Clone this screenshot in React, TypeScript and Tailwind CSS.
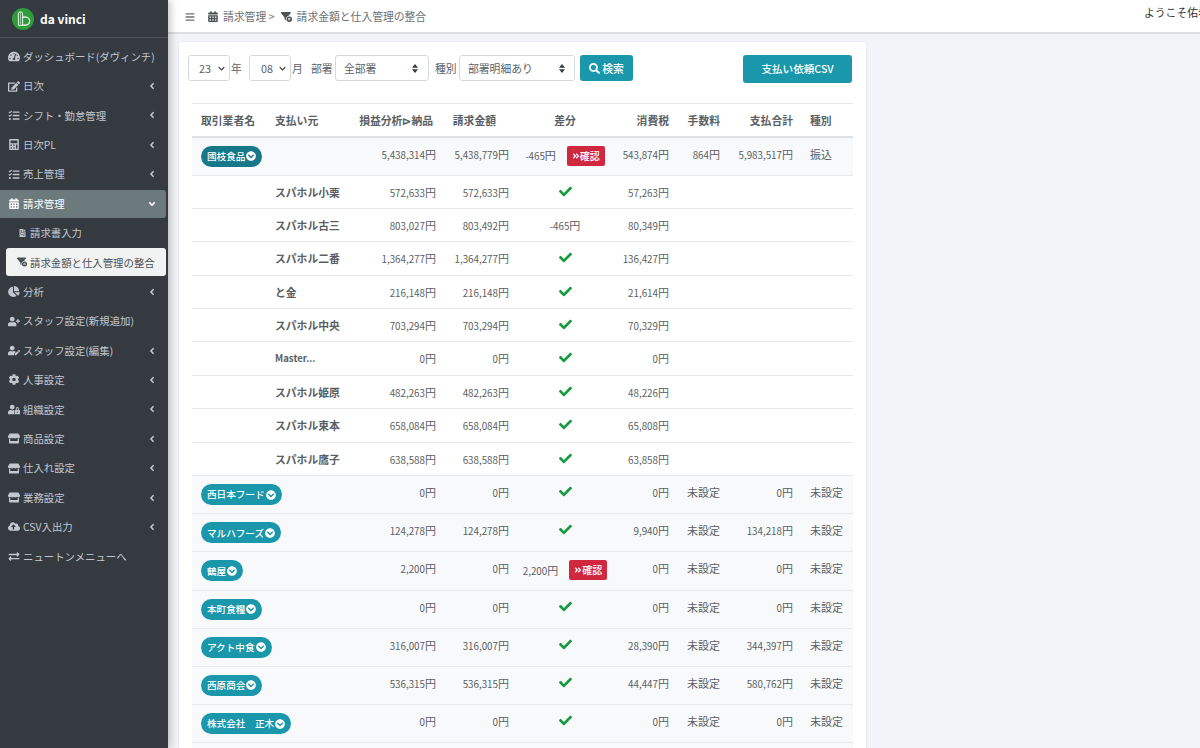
import React from "react";
import {
  FaTachometerAlt, FaEdit, FaTasks, FaCalculator, FaAngleLeft, FaAngleDown, FaChartPie, FaUserPlus, FaUserEdit, FaCog, FaUserLock, FaStore, FaCloudUploadAlt, FaExchangeAlt, FaBars, FaSearch, FaCheck, FaChevronCircleDown, FaAngleDoubleRight, FaFileInvoice,
} from "react-icons/fa";
import { FaCalendarDays, FaFilterCircleXmark } from "react-icons/fa6";

const font = "font-['Noto_Sans_CJK_JP','Noto_Sans',sans-serif]";

type Nav = { icon: React.ElementType; label: string; arrow?: boolean; kind?: "open" | "sub" | "current" };
const nav: Nav[] = [
  { icon: FaTachometerAlt, label: "ダッシュボード(ダヴィンチ)" },
  { icon: FaEdit, label: "日次", arrow: true },
  { icon: FaTasks, label: "シフト・勤怠管理", arrow: true },
  { icon: FaCalculator, label: "日次PL", arrow: true },
  { icon: FaTasks, label: "売上管理", arrow: true },
  { icon: FaCalendarDays, label: "請求管理", arrow: true, kind: "open" },
  { icon: FaFileInvoice, label: "請求書入力", kind: "sub" },
  { icon: FaFilterCircleXmark, label: "請求金額と仕入管理の整合", kind: "current" },
  { icon: FaChartPie, label: "分析", arrow: true },
  { icon: FaUserPlus, label: "スタッフ設定(新規追加)" },
  { icon: FaUserEdit, label: "スタッフ設定(編集)", arrow: true },
  { icon: FaCog, label: "人事設定", arrow: true },
  { icon: FaUserLock, label: "組織設定", arrow: true },
  { icon: FaStore, label: "商品設定", arrow: true },
  { icon: FaStore, label: "仕入れ設定", arrow: true },
  { icon: FaStore, label: "業務設定", arrow: true },
  { icon: FaCloudUploadAlt, label: "CSV入出力", arrow: true },
  { icon: FaExchangeAlt, label: "ニュートンメニューへ" },
];

function NavItem({ item }: { item: Nav }) {
  const Icon = item.icon;
  if (item.kind === "current") {
    return (
      <div className="h-[29.4px] pl-[6px] pr-[2px] py-[0.7px]">
        <div className="h-full flex items-center gap-[3px] pl-[11px] rounded-[3px] bg-[#f1f2f2] text-[#4a5056] text-[10.4px] whitespace-nowrap">
          <Icon className="w-[10px] h-[10px] shrink-0" />
          <span>{item.label}</span>
        </div>
      </div>
    );
  }
  if (item.kind === "sub") {
    return (
      <div className="h-[29.4px] flex items-center gap-[4px] pl-[19px] text-[10.4px] text-[#c2c7d0]">
        <Icon className="w-[7px] h-[8px] shrink-0" />
        <span>{item.label}</span>
      </div>
    );
  }
  const open = item.kind === "open";
  return (
    <div className="h-[29.4px] pr-[2px] py-[0.7px]">
      <div className={`h-full flex items-center pl-[8px] pr-[9px] rounded-r-[3px] text-[10.4px] whitespace-nowrap ${open ? "bg-[#6c7a7e] text-white" : "text-[#c2c7d0]"}`}>
        <Icon className="w-[12px] h-[11px] shrink-0 mr-[3px]" />
        <span>{item.label}</span>
        {item.arrow && (open ? <FaAngleDown className="ml-auto w-[10px] h-[10px]" /> : <FaAngleLeft className="ml-auto w-[10px] h-[10px]" />)}
      </div>
    </div>
  );
}

type Row = { name?: string; badge?: string; dark?: boolean; a: string; b: string; diff?: string; tax: string; fee?: string; total?: string; kind?: string };
const rows: Row[] = [
  { badge: "國枝食品", dark: true, a: "5,438,314円", b: "5,438,779円", diff: "-465円", tax: "543,874円", fee: "864円", total: "5,983,517円", kind: "振込" },
  { name: "スパホル小栗", a: "572,633円", b: "572,633円", tax: "57,263円" },
  { name: "スパホル古三", a: "803,027円", b: "803,492円", diff: "-465円", tax: "80,349円" },
  { name: "スパホル二番", a: "1,364,277円", b: "1,364,277円", tax: "136,427円" },
  { name: "と金", a: "216,148円", b: "216,148円", tax: "21,614円" },
  { name: "スパホル中央", a: "703,294円", b: "703,294円", tax: "70,329円" },
  { name: "Master...", a: "0円", b: "0円", tax: "0円" },
  { name: "スパホル姫原", a: "482,263円", b: "482,263円", tax: "48,226円" },
  { name: "スパホル束本", a: "658,084円", b: "658,084円", tax: "65,808円" },
  { name: "スパホル鷹子", a: "638,588円", b: "638,588円", tax: "63,858円" },
  { badge: "西日本フード", a: "0円", b: "0円", tax: "0円", fee: "未設定", total: "0円", kind: "未設定" },
  { badge: "マルハフーズ", a: "124,278円", b: "124,278円", tax: "9,940円", fee: "未設定", total: "134,218円", kind: "未設定" },
  { badge: "鶴屋", a: "2,200円", b: "0円", diff: "2,200円", tax: "0円", fee: "未設定", total: "0円", kind: "未設定" },
  { badge: "本町食糧", a: "0円", b: "0円", tax: "0円", fee: "未設定", total: "0円", kind: "未設定" },
  { badge: "アクト中食", a: "316,007円", b: "316,007円", tax: "28,390円", fee: "未設定", total: "344,397円", kind: "未設定" },
  { badge: "西原商会", a: "536,315円", b: "536,315円", tax: "44,447円", fee: "未設定", total: "580,762円", kind: "未設定" },
  { badge: "株式会社　正木", a: "0円", b: "0円", tax: "0円", fee: "未設定", total: "0円", kind: "未設定" },
  { badge: "", a: "", b: "", tax: "" },
];

function Val({ v }: { v?: string }) {
  if (!v) return null;
  if (!v.endsWith("円")) return <span className="text-[11px]">{v}</span>;
  return (
    <>
      {v.slice(0, -1)}
      <span className="text-[11px]">円</span>
    </>
  );
}

function Diff({ row }: { row: Row }) {
  if (row.badge && row.diff) {
    return (
      <div className="flex items-center justify-center gap-[11px]">
        <span><Val v={row.diff} /></span>
        <span className="h-[20px] w-[38px] flex items-center justify-center rounded-[2px] bg-[#d0293f] text-white text-[10px] font-medium">
          <FaAngleDoubleRight className="w-[8px] h-[8px]" />確認
        </span>
      </div>
    );
  }
  if (row.diff) return <div className="text-center"><Val v={row.diff} /></div>;
  return (
    <div className="flex justify-center pt-[1px]">
      <FaCheck className="w-[15px] h-[13px] text-[#159a3e]" />
    </div>
  );
}

function Select({ label, className, wide }: { label: string; className: string; wide?: boolean }) {
  return (
    <div className={`h-[26px] flex items-center shrink-0 justify-between bg-white border border-[#d5d9de] rounded-[3px] text-[10.8px] text-[#5b6167] ${className}`}>
      <span>{label}</span>
      {wide ? (
        <svg viewBox="0 0 8 12" className="w-[6px] h-[9px] text-[#343a40]"><path d="M4 0 8 5H0ZM4 12 0 7H8Z" fill="currentColor" /></svg>
      ) : (
        <svg viewBox="0 0 10 6" className="w-[7px] h-[5px]"><path d="M1 1 5 5 9 1" fill="none" stroke="#343a40" strokeWidth="1.6" /></svg>
      )}
    </div>
  );
}

export default function App() {
  return (
    <div className={`${font} w-[1200px] h-[748px] overflow-hidden flex bg-[#f3f4f9] text-[#5a5f64]`}>
      <aside className="w-[168px] shrink-0 h-full bg-[#343a40] shadow-[2px_0_8px_rgba(0,0,0,0.25)] z-10">
        <div className="h-[38px] flex items-center gap-[6px] pl-[12px] border-b border-[#4b545c]">
          <svg viewBox="0 0 24 24" className="w-[22px] h-[22px] shrink-0">
            <circle cx="12" cy="12" r="12" fill="#2f9c3a" />
            <path d="M7 6.5a2.3 2.3 0 0 1 4.6 0V19H7Z" fill="none" stroke="#fff" strokeWidth="1" />
            <path d="M9.3 4.5V19" stroke="#d6ecd7" strokeWidth=".7" />
            <path d="M11.6 10h3.4a4.2 4.2 0 0 1 0 8.6h-3.4" fill="none" stroke="#fff" strokeWidth="1.3" />
          </svg>
          <span className="text-white font-bold text-[12px]">da vinci</span>
        </div>
        <nav className="pt-[4px]">
          {nav.map((n) => <NavItem key={n.label} item={n} />)}
        </nav>
      </aside>
      <div className="flex-1 min-w-0 flex flex-col">
        <header className="h-[34px] shrink-0 flex items-center bg-white border-b-2 border-[#dcdee3] pl-[17px] pt-[1px] text-[10.8px] text-[#6b7075]">
          <FaBars className="w-[10px] h-[10px] mr-[13px]" />
          <FaCalendarDays className="w-[10px] h-[11px] mr-[5px] text-[#4c5156]" />
          <span>請求管理 &gt;</span>
          <FaFilterCircleXmark className="w-[11px] h-[10px] ml-[6px] mr-[5px] text-[#4c5156]" />
          <span>請求金額と仕入管理の整合</span>
          <div className="ml-auto w-[56px] overflow-hidden whitespace-nowrap text-[#333] -mt-[8px]">ようこそ佑希さん</div>
        </header>
        <main className="flex-1 min-h-0 pl-[11px] pt-[8px]">
          <div className="w-[687px] rounded-t-[3px] bg-white shadow-[0_0_2px_rgba(0,0,0,0.12)] px-[9px] pt-[13px]">
            <div className="flex items-start text-[10.8px] h-[48px]">
              <Select label="23" className="w-[42px] pl-[10px] pr-[4px]" />
              <span className="ml-[1px] mt-[5px] w-[18px]">年</span>
              <Select label="08" className="w-[42px] pl-[11px] pr-[4px]" />
              <span className="ml-[1px] mt-[5px] w-[19px]">月</span>
              <span className="mt-[5px] w-[24px]">部署</span>
              <Select wide label="全部署" className="w-[94px] pl-[8px] pr-[10px]" />
              <span className="mt-[5px] ml-[6px] w-[24px]">種別</span>
              <Select wide label="部署明細あり" className="w-[116px] pl-[8px] pr-[9px]" />
              <button className="ml-[5px] w-[53px] h-[26px] flex items-center justify-center gap-[2px] rounded-[3px] bg-[#1a97ab] text-white font-medium text-[10.8px]">
                <FaSearch className="w-[11px] h-[11px]" />検索
              </button>
              <button className="ml-auto mr-[5px] w-[109px] h-[28px] rounded-[3px] bg-[#1a97ab] text-white font-medium text-[10.6px]">支払い依頼CSV</button>
            </div>
            <table className="w-[661px] ml-[4px] table-fixed border-collapse text-[9.8px]">
              <colgroup>
                <col className="w-[74px]" /><col className="w-[84px]" /><col className="w-[95px]" /><col className="w-[73px]" /><col className="w-[94px]" /><col className="w-[66px]" /><col className="w-[51px]" /><col className="w-[73px]" /><col className="w-[51px]" />
              </colgroup>
              <thead>
                <tr className="h-[33px] border-t border-b-2 border-t-[#e6e8ea] border-b-[#dee2e6] text-[10.8px] font-bold">
                  <th className="text-left pl-[9px] whitespace-nowrap">取引業者名</th>
                  <th className="text-left pl-[9px]">支払い元</th>
                  <th className="text-right pr-[12px] whitespace-nowrap">損益分析⊳納品</th>
                  <th className="text-right pr-[22px]">請求金額</th>
                  <th className="text-center">差分</th>
                  <th className="text-right pr-[9px]">消費税</th>
                  <th className="text-right pr-[9px]">手数料</th>
                  <th className="text-right pr-[9px]">支払合計</th>
                  <th className="text-left pl-[8px]">種別</th>
                </tr>
              </thead>
              <tbody>
                {rows.map((r, i) => (
                  <tr key={i} className={`border-b border-[#e6e8ea] align-top ${r.badge !== undefined ? "bg-[#f8f9fb] h-[38.2px]" : "h-[33.4px]"}`}>
                    <td className="pl-[9px] py-[8px] whitespace-nowrap overflow-visible">
                      {r.badge && (
                        <span className={`inline-flex h-[21px] items-center gap-[1px] px-[6px] rounded-full text-white text-[9.6px] font-medium ${r.dark ? "bg-[#17788a]" : "bg-[#1a97ab]"}`}>
                          {r.badge}<FaChevronCircleDown className="w-[10px] h-[10px]" />
                        </span>
                      )}
                    </td>
                    <td className={`pl-[9px] py-[8px] font-bold leading-[16px] whitespace-nowrap ${r.name === "Master..." ? "text-[9.6px]" : "text-[10.8px]"}`}>{r.name}</td>
                    <td className="pr-[9px] text-right leading-[16px] pt-[8px]"><Val v={r.a} /></td>
                    <td className="pr-[9px] text-right leading-[16px] pt-[8px]"><Val v={r.b} /></td>
                    <td className="leading-[16px] pt-[8px]">{r.a && <Diff row={r} />}</td>
                    <td className="pr-[9px] text-right leading-[16px] pt-[8px]"><Val v={r.tax} /></td>
                    <td className="pr-[9px] pt-[8px] text-right leading-[16px]"><Val v={r.fee} /></td>
                    <td className="pr-[9px] pt-[8px] text-right leading-[16px]"><Val v={r.total} /></td>
                    <td className="pl-[8px] pt-[8px] leading-[16px]"><Val v={r.kind} /></td>
                  </tr>
                ))}
              </tbody>
            </table>
          </div>
        </main>
      </div>
    </div>
  );
}
